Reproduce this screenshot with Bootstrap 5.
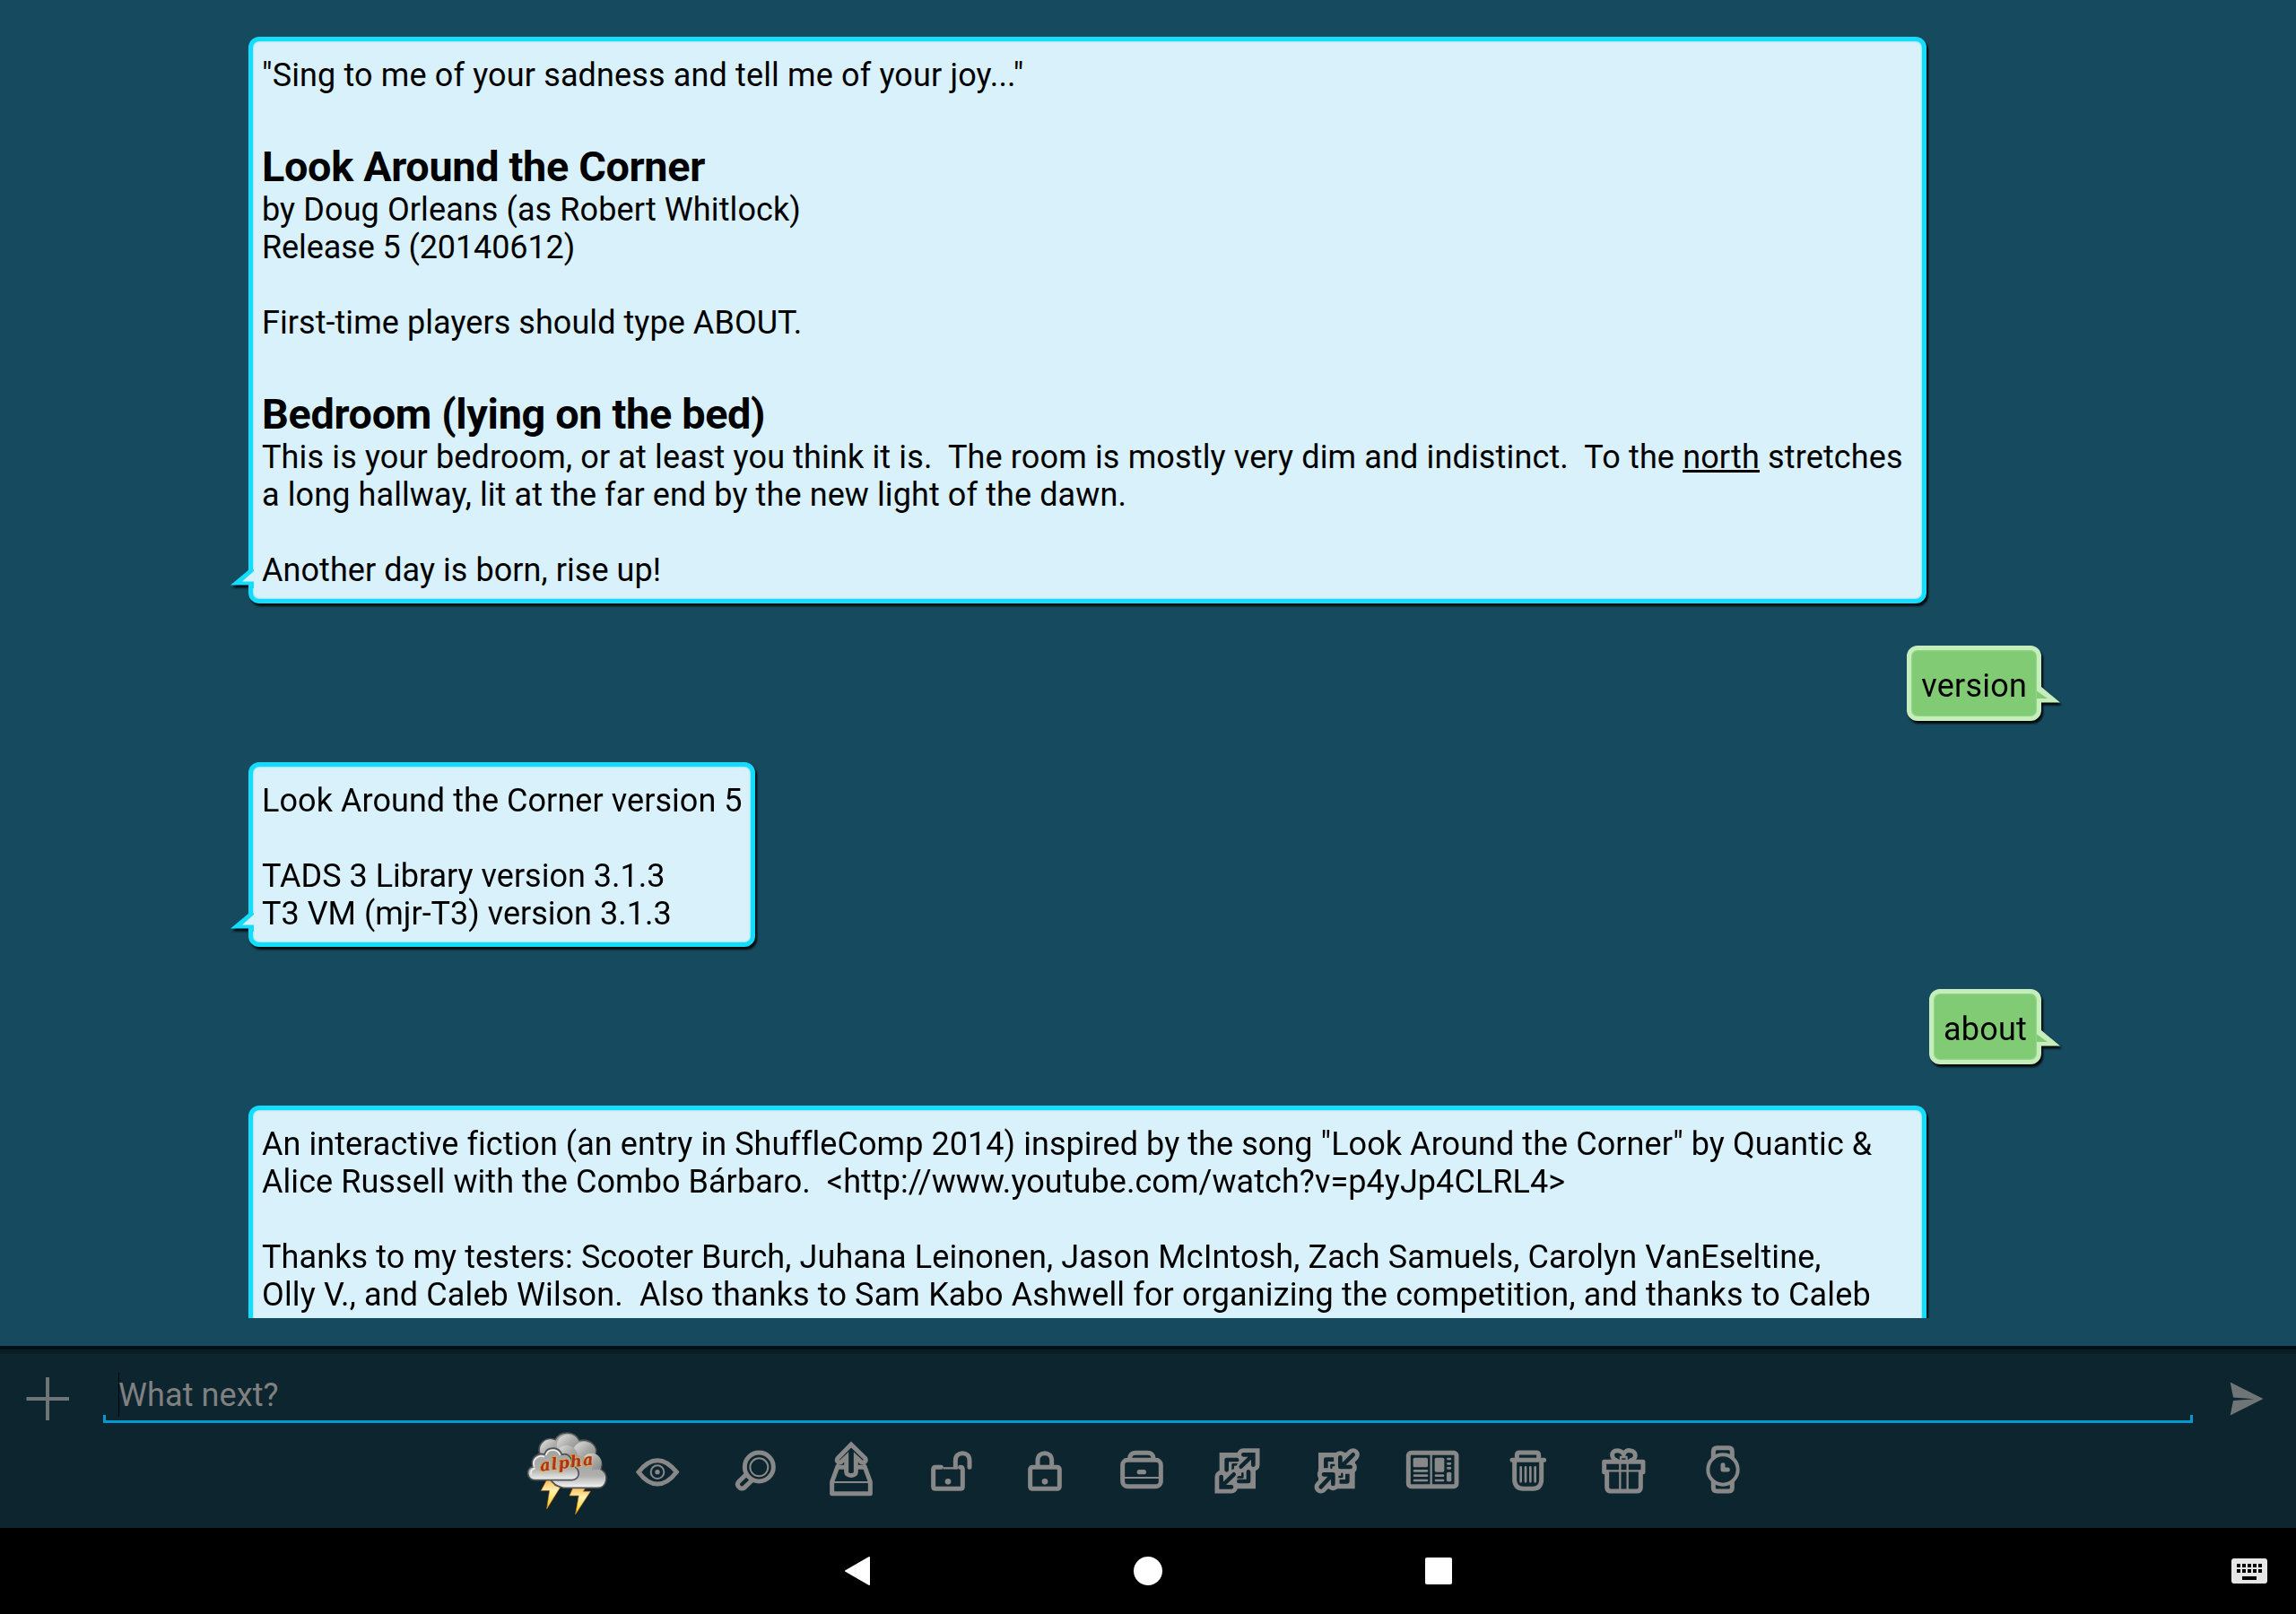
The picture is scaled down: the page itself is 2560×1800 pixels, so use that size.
<!DOCTYPE html>
<html lang="en">
<head>
<meta charset="utf-8">
<title>Look Around the Corner</title>
<link href="https://cdn.jsdelivr.net/npm/bootstrap@5.3.0/dist/css/bootstrap.min.css" rel="stylesheet">
<style>
body{background:#164a5e;font-family:Roboto,"Liberation Sans",sans-serif;font-size:36px;line-height:42px;color:#000;width:2560px;height:1800px}
.chat-log{height:1470px;padding:41px 264px 0 277px}
.bubble{width:max-content;white-space:pre;border-radius:12px;filter:drop-shadow(2px 3px 1px rgba(0,0,0,.9))}
.bubble p{margin:0;height:42px}
.bubble-game{background:#d9f1fb;border:5px solid #14dcfc;padding:17px 9px 11px 10px;box-shadow:inset 0 0 2px #14dcfc}
.bubble-wide{width:1871px}
.bubble-user{background:#80cb74;border:5px solid #c6eebc;padding:19px 11px 12px 11px;box-shadow:inset 0 0 2px #c6eebc;height:84px;margin:47px 20px 46px 0;letter-spacing:.2px}
.tail{width:26px;height:24px;overflow:visible}
.tail-l{left:-25px;bottom:9px}
.tail-r{right:-26px;bottom:9px}
.bubble .room-title{font-size:46.8px;font-weight:700;line-height:54px;height:54px;letter-spacing:-.33px}
.track-1{letter-spacing:.06px}
.track-2{letter-spacing:.1px}
.track-3{letter-spacing:.138px}
.track-n{letter-spacing:-.1px}
.log-gap{height:31px}
.composer{height:203px;background:#0d252f;box-shadow:inset 0 4px 0 #030e15,inset 0 9px 0 #0a1e26}
.entry-row{height:88px}
.entry{width:2330px;height:58px;margin-left:38px;margin-top:28px;border-bottom:3px solid #0099d0;color:#808080;padding:0 0 2px 17px}
.entry::before,.entry::after{content:"";position:absolute;bottom:-3px;width:3px;height:9px;background:#0099d0}
.entry::before{left:0}.entry::after{right:0}
.caret{width:1px;height:49px;background:#000;margin-right:-1px}
.tools{height:111px;padding-top:1px}
.tools svg{height:110px;flex:none}
.line-art{fill:none;stroke:#888;stroke-width:15;stroke-linejoin:round;stroke-linecap:round}
.line-art .halo{stroke-width:43}
.line-art .cut{stroke:#0d252f;stroke-width:14}
.sysbar{height:96px;background:#000}
.sysbar svg{display:block}
</style>
<script src="https://cdn.jsdelivr.net/npm/bootstrap@5.3.0/dist/js/bootstrap.bundle.min.js"></script>
</head>
<body class="m-0 overflow-hidden d-flex flex-column">
<main class="chat-log overflow-hidden flex-shrink-0 d-flex flex-column align-items-start">
<div class="bubble bubble-game bubble-wide position-relative flex-shrink-0"><p class="track-3">"Sing to me of your sadness and tell me of your joy..."</p><p class="room-title"></p><p class="room-title">Look Around the Corner</p><p class="track-2">by Doug Orleans (as Robert Whitlock)</p><p class="track-n">Release 5 (20140612)</p><p></p><p class="track-1">First-time players should type ABOUT.</p><p class="room-title"></p><p class="room-title">Bedroom (lying on the bed)</p><p class="track-3">This is your bedroom, or at least you think it is.  The room is mostly very dim and indistinct.  To the <u>north</u> stretches</p><p class="track-2">a long hallway, lit at the far end by the new light of the dawn.</p><p></p><p class="track-1">Another day is born, rise up!</p><svg class="tail tail-l position-absolute" viewBox="0 0 26 24"><path d="M21 0L0 17.500H21V21H26V0Z" fill="#14dcfc"/><path d="M26 2L13 13.500H26Z" fill="#d9f1fb"/></svg></div>
<div class="bubble bubble-user position-relative align-self-end flex-shrink-0">version<svg class="tail tail-r position-absolute" viewBox="0 0 26 24"><path d="M0 0H5L26 17.500H5V19H0Z" fill="#c6eebc"/><path d="M0 4.500L12 13H0Z" fill="#80cb74"/></svg></div>
<div class="bubble bubble-game position-relative flex-shrink-0"><p class="track-1">Look Around the Corner version 5</p><p></p><p>TADS 3 Library version 3.1.3</p><p>T3 VM (mjr-T3) version 3.1.3</p><svg class="tail tail-l position-absolute" viewBox="0 0 26 24"><path d="M21 0L0 17.500H21V21H26V0Z" fill="#14dcfc"/><path d="M26 2L13 13.500H26Z" fill="#d9f1fb"/></svg></div>
<div class="bubble bubble-user position-relative align-self-end flex-shrink-0">about<svg class="tail tail-r position-absolute" viewBox="0 0 26 24"><path d="M0 0H5L26 17.500H5V19H0Z" fill="#c6eebc"/><path d="M0 4.500L12 13H0Z" fill="#80cb74"/></svg></div>
<div class="bubble bubble-game bubble-wide position-relative flex-shrink-0"><p class="track-1">An interactive fiction (an entry in ShuffleComp 2014) inspired by the song "Look Around the Corner" by Quantic &amp;</p><p class="track-1">Alice Russell with the Combo Bárbaro.  &lt;http://www.youtube.com/watch?v=p4yJp4CLRL4&gt;</p><p></p><p class="track-2">Thanks to my testers: Scooter Burch, Juhana Leinonen, Jason McIntosh, Zach Samuels, Carolyn VanEseltine,</p><p class="track-3">Olly V., and Caleb Wilson.  Also thanks to Sam Kabo Ashwell for organizing the competition, and thanks to Caleb</p><p></p></div>
</main>
<div class="log-gap flex-shrink-0"></div>
<footer class="composer flex-shrink-0">
<div class="entry-row d-flex align-items-start">
<svg width="77" height="88" viewBox="0 0 77 88" class="flex-shrink-0"><path d="M29.500 59H77M53 35V83" stroke="#6f7476" stroke-width="4"/></svg>
<div class="entry position-relative d-flex align-items-center flex-shrink-0"><span class="caret"></span><span class="track-2">What next?</span></div>
<svg width="115" height="88" viewBox="2445 1501 115 88" class="flex-shrink-0"><path d="M2486.700 1541.500L2523.500 1560L2486.700 1578.500L2490 1562L2513 1560.200L2490 1558.500Z" fill="#6f7476"/></svg>
</div>
<div class="tools d-flex justify-content-center">
<svg width="110" viewBox="30 30 330 330">
<defs>
<linearGradient id="puff" x1="0" y1="0" x2="1" y2="1"><stop offset="0" stop-color="#e4e4e2"/><stop offset=".5" stop-color="#a9aaa7"/><stop offset="1" stop-color="#80827f"/></linearGradient>
<linearGradient id="base" x1="0" y1="0" x2="0" y2="1"><stop offset="0" stop-color="#a2a3a0"/><stop offset=".65" stop-color="#aeafac"/><stop offset="1" stop-color="#f0f0ef"/></linearGradient>
<linearGradient id="zap" x1="0" y1="0" x2="0" y2="1"><stop offset="0" stop-color="#f8b64c"/><stop offset=".4" stop-color="#fff3b5"/><stop offset="1" stop-color="#f2d000"/></linearGradient>
</defs>
<path d="M120 210L100 247H128L119 308L167 231H145L158 208Z" fill="url(#zap)" stroke="#dd7d16" stroke-width="2"/>
<path d="M208 235L195 264H226L215 326L265 250H241L250 233Z" fill="url(#zap)" stroke="#dd7d16" stroke-width="2"/>
<path d="M95 125C85 88 117 66 147 77C164 46 213 46 228 80C263 72 293 99 281 127C302 139 306 160 300 177C329 191 320 238 290 238H175Q130 230 120 180Z" fill="url(#base)" stroke="#4e5257" stroke-width="5"/>
<circle cx="131" cy="110" r="34" fill="url(#puff)"/><circle cx="189" cy="97" r="37" fill="url(#puff)"/><circle cx="243" cy="121" r="37" fill="url(#puff)"/><circle cx="185" cy="133" r="37" fill="url(#puff)"/><circle cx="269" cy="155" r="33" fill="url(#puff)"/>
<path d="M175 180C178 137 215 120 243 135C266 143 274 166 269 180C299 168 316 186 312 208C309 231 292 235 280 234H178Q150 230 150 205Z" fill="url(#base)"/>
<path d="M72 167C62 139 88 119 111 126C120 98 161 99 169 127C192 118 211 146 201 165C235 167 232 212 203 212H82C50 211 48 173 72 167Z" fill="url(#base)" stroke="#4e5257" stroke-width="5"/>
<path d="M77 168C68 145 90 126 111 134M116 129C124 105 155 106 164 129M66 193C65 180 71 174 80 173" fill="none" stroke="#ededeb" stroke-width="5"/>
<text x="98" y="182" transform="rotate(-7 98 182)" font-family="DejaVu Serif,serif" font-size="54" font-style="italic" font-weight="700" textLength="180" lengthAdjust="spacing" fill="#ac3026" stroke="#e9b52e" stroke-width="4" paint-order="stroke">alpha</text>
</svg>
<svg width="90" viewBox="360 30 270 330"><g class="line-art"><path d="M426 185Q456 146 489 146T553 185Q522 225 489 225T426 185Z" stroke-linejoin="miter"/><circle cx="489" cy="185" r="22" stroke-width="6"/></g><circle cx="489" cy="185" r="8" fill="#888"/></svg>
<svg width="120" viewBox="630 30 360 330"><g class="line-art"><circle cx="829" cy="168" r="48"/><circle cx="829" cy="169" r="30" stroke-width="6"/><path d="M783 196L762 216C751 227 762 245 779 238L804 214"/></g></svg>
<svg width="100" viewBox="0 0 300 330"><g class="line-art"><path d="M147 63L102 109C97 117 102 126 113 122L131 105V155C131 170 163 170 163 155V105L181 122C192 126 199 117 194 109Z" stroke-linejoin="miter"/><path d="M102 136L83 188V227H211V188L192 136" /><path d="M108 139H128M166 139H188"/><path d="M84 189H210" stroke-width="6" /></g></svg>
<svg width="110" viewBox="300 0 330 330"><g class="line-art"><path d="M448 139H430Q422 139 422 147V203Q422 211 430 211H512Q520 211 520 203V147Q520 139 512 139"/><path d="M455 142H505" stroke-width="7" stroke-linecap="butt"/><path d="M496 138V116C496 84 543 84 543 116V139"/></g><circle cx="471" cy="187" r="10" fill="#888"/></svg>
<svg width="110" viewBox="630 0 330 330"><g class="line-art"><rect x="746" y="139" width="98" height="72" rx="7"/><path d="M771 136V116C771 84 818 84 818 116V136"/></g><circle cx="795" cy="187" r="10" fill="#888"/></svg>
<svg width="100" viewBox="0 0 300 330"><g class="line-art"><rect x="95" y="115" width="128" height="88" rx="16"/><path d="M119 110C120 94 128 91 139 91H178C191 91 197 95 198 110"/><path d="M98 174H220" stroke-width="6"/></g><rect x="143" y="147" width="31" height="16" rx="8" fill="#888"/></svg>
<svg width="115" viewBox="300 0 345 330"><path d="M419 90H540V211H419Z" fill="#888"/><g class="line-art"><path class="cut" d="M443 148V114H478M516 154V186H484"/><path class="cut" d="M464 146V130H482M496 160V172H480" style="stroke-width:8"/><path class="halo" d="M499 97H532V131M425 171V205H459" stroke-linejoin="miter"/><path d="M490 138L530 99M470 160L430 200" stroke-width="30"/><path class="cut" d="M499 97H532V131M425 171V205H459" stroke-linejoin="miter"/><path class="cut" d="M491 137L528 101M467 163L430 199" stroke-width="12"/></g></svg>
<svg width="105" viewBox="645 0 315 330"><path d="M750 90H872V211H750Z" fill="#888"/><g class="line-art"><path class="cut" d="M775 140V113H800M847 161V187H823"/><path class="halo" d="M866 97L830 133M823 106V140H857M758 205L790 171M768 163H799V195"/><path class="cut" d="M866 97L830 133M823 106V138H857M758 205L790 171M768 163H799V195"/><path d="M811 92V209M752 150H868" stroke-width="6"/><path class="cut" d="M793 141V132H802M829 161V171H820" style="stroke-width:7"/></g></svg>
<svg width="115" viewBox="0 0 345 330"><g class="line-art"><rect x="91" y="91" width="161" height="112" rx="9"/><path d="M167 95V199" stroke-width="7"/><path d="M111 151H153M111 167H153M111 183H153M183 167H207M183 183H207M223 111H231M223 127H231M223 142H231" stroke-width="8"/></g><g fill="#888"><rect x="107" y="107" width="49" height="32" rx="5"/><rect x="179" y="107" width="32" height="48" rx="5"/><rect x="219" y="155" width="16" height="32" rx="5"/></g></svg>
<svg width="100" viewBox="345 0 300 330"><g class="line-art"><path d="M438 115H545M454 110V98Q454 90 463 90H518Q527 90 527 98V110M446 120V184Q449 211 475 211H508Q533 211 536 184V120"/><path d="M467 139V187M483 139V187M499 139V187M515 139V187" stroke-width="8"/></g></svg>
<svg width="110" viewBox="645 0 330 330"><g class="line-art"><path d="M746 155V121H876V155H868V207Q867 219 855 219H768Q756 219 755 207V155Z"/><path d="M755 151H868M799 122V215M824 122V215" stroke-width="7"/><path d="M787 116C770 112 765 83 790 83C801 83 810 92 811 96C813 87 823 82 832 83C857 85 854 112 835 116"/><path d="M801 119V105H821V119" stroke-width="7"/></g></svg>
<svg width="115" viewBox="975 0 345 330"><g class="line-art"><circle cx="1143" cy="147" r="50" stroke-width="12"/><path d="M1111 105V87Q1111 74 1123 74H1163Q1174 74 1174 87V105M1111 188V207Q1111 219 1123 219H1163Q1174 219 1174 207V188"/><path d="M1143 131V147H1159"/></g></svg>
</div>
</footer>
<nav class="sysbar flex-shrink-0">
<svg width="2560" height="96" viewBox="0 1704 2560 96"><path d="M969 1737V1767L943 1752Z" fill="#fff" stroke="#fff" stroke-width="2" stroke-linejoin="round"/><circle cx="1280" cy="1752" r="16" fill="#fff"/><rect x="1589" y="1737" width="30" height="30" rx="2" fill="#fff"/><rect x="2488" y="1738" width="40" height="28" rx="3" fill="#e6e6e6"/><path d="M2494 1746H2522M2494 1752H2522" stroke="#000" stroke-width="4" stroke-dasharray="4 2"/><path d="M2500 1760H2516" stroke="#000" stroke-width="4"/></svg>
</nav>
</body>
</html>
